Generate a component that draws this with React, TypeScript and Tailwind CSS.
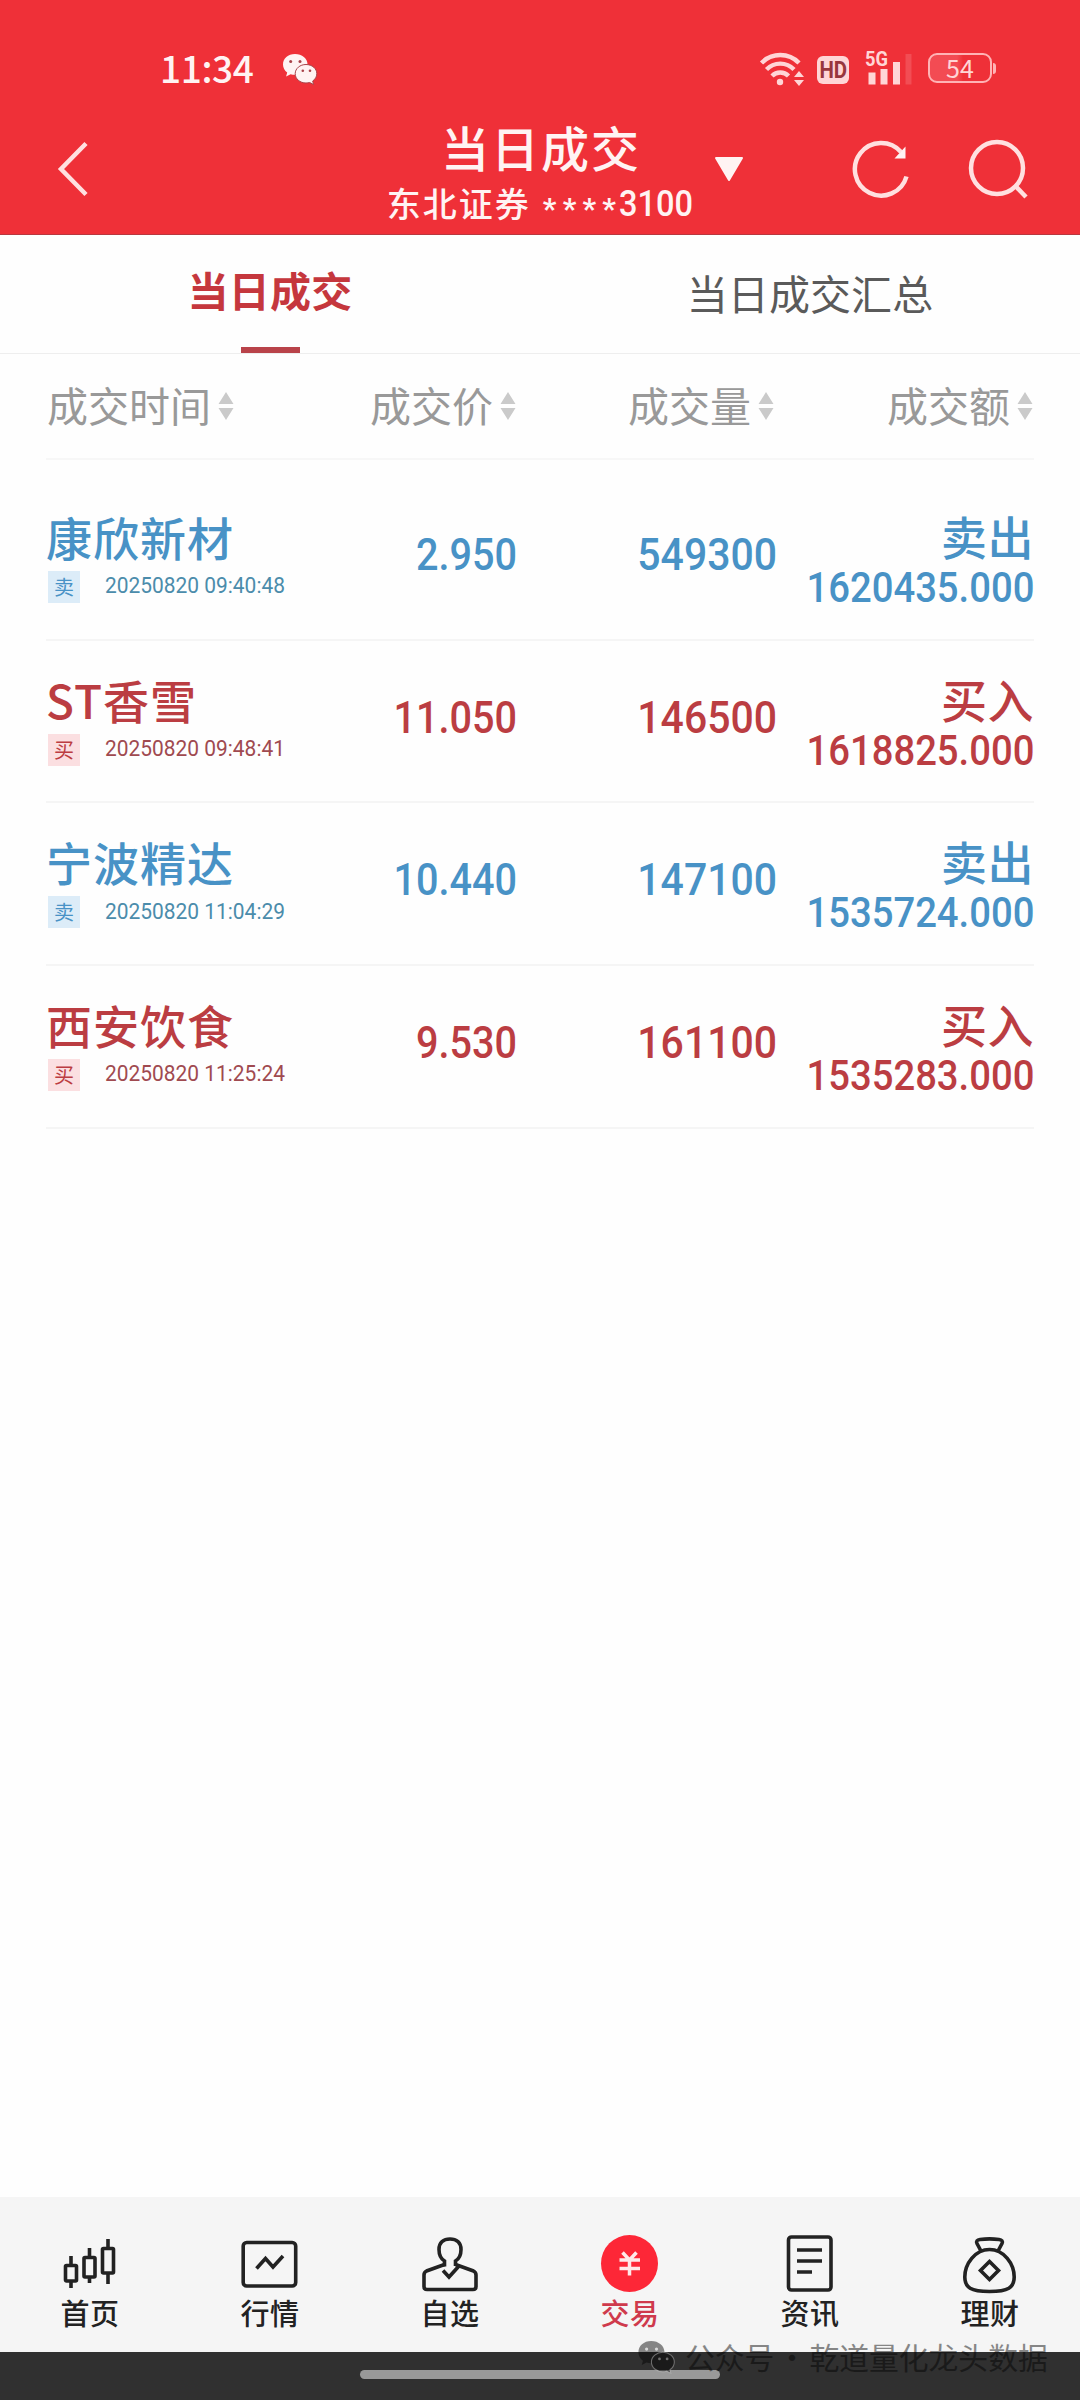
import React from 'react';

interface Trade {
  name: string;
  side: 'buy' | 'sell';
  time: string;
  price: string;
  volume: string;
  amount: string;
}

const trades: Trade[] = [
  { name: '康欣新材', side: 'sell', time: '20250820 09:40:48', price: '2.950', volume: '549300', amount: '1620435.000' },
  { name: 'ST香雪', side: 'buy', time: '20250820 09:48:41', price: '11.050', volume: '146500', amount: '1618825.000' },
  { name: '宁波精达', side: 'sell', time: '20250820 11:04:29', price: '10.440', volume: '147100', amount: '1535724.000' },
  { name: '西安饮食', side: 'buy', time: '20250820 11:25:24', price: '9.530', volume: '161100', amount: '1535283.000' },
];

const WechatIcon: React.FC<{ className?: string; eye: string }> = ({ className, eye }) => (
  <svg viewBox="0 0 36 32" className={className}>
    <path d="M13 1C6 1 1 5.600 1 11.500c0 3.300 1.600 6.100 4.200 8l-1.100 4 4.500-2.300c1.400.4 2.900.6 4.400.6 7 0 12.500-4.400 12.500-10.300S20 1 13 1z" fill="currentColor" />
    <path d="M24 11.500c-6 0-10.800 4-10.800 9.200S18 30 24 30c1.300 0 2.500-.2 3.600-.5l4 2-.9-3.500c2.500-1.700 4.100-4.300 4.100-7.300 0-5.200-4.800-9.200-10.800-9.200z" fill="currentColor" stroke={eye} strokeWidth="1" />
    <circle cx="8.700" cy="8.500" r="1.500" fill={eye} />
    <circle cx="18" cy="8.500" r="1.500" fill={eye} />
    <circle cx="20.800" cy="17.800" r="1.300" fill={eye} />
    <circle cx="28" cy="17.800" r="1.300" fill={eye} />
  </svg>
);

const SortIcon: React.FC = () => (
  <svg viewBox="0 0 16 30" className="ml-[7px] mt-[4px] h-[30px] w-4 shrink-0 fill-[#cacaca]">
    <path d="M8 1l7.500 12H.5zM8 29l7.500-12H.5z" />
  </svg>
);

const StatusBar: React.FC = () => (
  <div className="flex h-[92px] items-start pl-[160px] pr-[84px] pt-[50px]">
    <span className="-mt-[2px] w-[96px] text-[37px] font-medium leading-[38px] tracking-[-0.400px]">11:34</span>
    <WechatIcon className="ml-[26px] mt-[3px] h-[32px] w-[36px]" eye="#a8434a" />
    <div className="ml-auto flex text-[#ffd5d6]">
      <svg viewBox="0 0 48 36" className="h-9 w-12" fill="none" stroke="currentColor" strokeWidth="4.400">
        <path d="M2.500 13a26 26 0 0 1 37.500 0M7.500 19.500a19 19 0 0 1 27.500 0M13 26a11.500 11.500 0 0 1 16.500 0" />
        <circle cx="21" cy="32" r="3.200" fill="currentColor" stroke="none" />
        <path d="M40 21l5 6H35zM40 36l5-6H35z" fill="currentColor" stroke="none" />
      </svg>
      <div className="ml-[10px] mt-[6px] flex h-[28px] w-[32px] items-center justify-center rounded-[6px] bg-[#ffd5d6] text-[#98363d]">
        <span className="scale-x-85 font-['Roboto',sans-serif] text-[24px] font-bold leading-none">HD</span>
      </div>
      <svg viewBox="0 0 48 40" className="-mt-[4px] ml-[16px] h-10 w-12" fill="currentColor">
        <text x="0" y="20" fontSize="20" fontWeight="700" fontFamily="Roboto, sans-serif" textLength="23" lengthAdjust="spacingAndGlyphs">5G</text>
        <path d="M3.500 26.500h7v12h-7zM15.500 23h7v15.500h-7zM28 16h7v22.500h-7z" />
        <path d="M40.500 8h6v30.500h-6z" opacity=".18" />
      </svg>
      <div className="ml-[15px] mt-[3px] flex h-[30px] items-center">
        <div className="flex h-[30px] w-[64px] items-center justify-center rounded-[9px] border-[2.500px] border-[#ffb3b5] bg-linear-to-r from-[#f34b53] from-45% to-[#ef3038] to-55%">
          <span className="text-[25px] leading-[22px] -translate-y-px">54</span>
        </div>
        <div className="ml-px h-[11px] w-[3px] rounded-r-sm bg-[#ffb3b5]" />
      </div>
    </div>
  </div>
);

const Header: React.FC = () => (
  <header className="flex h-[235px] shrink-0 flex-col border-b border-[#b8383f] bg-[#ef3038] text-[#fff3f3]">
    <StatusBar />
    <div className="relative flex flex-1 justify-center">
      <svg viewBox="0 0 32 56" className="absolute left-[57px] top-[49px] h-14 w-8" fill="none" stroke="#ffe0e0" strokeWidth="4.500">
        <path d="M29 2.500L4 28l25 25.500" />
      </svg>
      <div className="flex flex-col items-center pt-[30px]">
        <h1 className="ml-[2px] text-[48px] font-medium leading-[48px] tracking-[2px]">当日成交</h1>
        <div className="mt-[16px] flex h-[34px] items-center">
          <span className="text-[34px] font-medium leading-[34px] tracking-[2px]">东北证券</span>
          <span className="ml-[12px] mt-[12px] font-['Roboto',sans-serif] text-[30px] font-bold leading-[34px] tracking-[6.200px]">****</span>
          <span className="-ml-[3px] mt-[2px] w-[74px] origin-left scale-x-88 font-['Roboto',sans-serif] text-[37px] font-medium leading-[34px]">3100</span>
        </div>
      </div>
      <svg viewBox="0 0 30 26" className="absolute left-[714px] top-[64px] h-[26px] w-[30px]" fill="currentColor" stroke="currentColor" strokeWidth="2" strokeLinejoin="round">
        <path d="M2 2h26L15 24z" />
      </svg>
      <svg viewBox="0 0 60 60" className="absolute left-[851px] top-[47px] h-[60px] w-[60px]" fill="none" stroke="#ffe0e0" strokeWidth="4.500">
        <path d="M55.500 37.500A26.300 26.300 0 1 1 50 13" />
        <path d="M54.500 7.500v12H43.500z" fill="#fff3f3" stroke="none" />
      </svg>
      <svg viewBox="0 0 62 62" className="absolute left-[967px] top-[46px] h-[62px] w-[62px]" fill="none" stroke="#ffe0e0" strokeWidth="4.500">
        <circle cx="30" cy="30" r="26" />
        <path d="M48 47.500l11 11.500" />
      </svg>
    </div>
  </header>
);

const Tabs: React.FC = () => (
  <nav className="flex h-[119px] shrink-0 border-b border-[#eeeeee]">
    <div className="flex w-1/2 flex-col items-center pt-[34px]">
      <span className="text-[41px] font-bold leading-[40px] tracking-[0.300px] text-[#c5373d]">当日成交</span>
      <div className="mt-auto h-[6px] w-[59px] bg-[#b9434a]" />
    </div>
    <div className="flex w-1/2 justify-center pt-[37px]">
      <span className="text-[41px] leading-[40px] tracking-[0.100px] text-[#5a5a5a]">当日成交汇总</span>
    </div>
  </nav>
);

const columns = ['成交时间', '成交价', '成交量', '成交额'];

const TableHead: React.FC = () => (
  <div className="mx-[46px] grid h-[106px] shrink-0 grid-cols-[188px_282px_258px_259px] items-center border-b-2 border-[#f7f7f7] pb-[5px] text-[41px] leading-[40px] text-[#999]">
    {columns.map((label) => (
      <div key={label} className="flex items-center justify-end whitespace-nowrap">
        <span>{label}</span>
        <SortIcon />
      </div>
    ))}
  </div>
);

const numberClass = "origin-right text-right font-['Roboto',sans-serif] font-medium";

const TradeRow: React.FC<{ trade: Trade }> = ({ trade }) => {
  const sell = trade.side === 'sell';
  return (
    <div className={`grid h-[162.700px] grid-cols-[240px_231px_260px_257px] border-b-2 border-[#f5f5f5] ${sell ? 'text-[#4892c6]' : 'text-[#bb3d42]'}`}>
      <div className="flex flex-col pt-[35px]">
        <span className="whitespace-nowrap text-[46px] font-medium leading-[46px] tracking-[1px]">{trade.name}</span>
        <div className="mt-[12px] flex items-center">
          <span className={`ml-[2px] flex h-8 w-8 shrink-0 items-center justify-center text-[20px] leading-none ${sell ? 'bg-[#dcecf8]' : 'bg-[#fbdfe1]'}`}>
            {sell ? '卖' : '买'}
          </span>
          <span className={`-mt-[3px] ml-[25px] origin-left scale-x-93 whitespace-nowrap font-['Roboto',sans-serif] text-[22.500px] leading-none ${sell ? 'text-[#4b8cab]' : 'text-[#a04a50]'}`}>
            {trade.time}
          </span>
        </div>
      </div>
      <span className={`${numberClass} scale-x-88 pt-[54px] text-[45px] leading-[45px]`}>{trade.price}</span>
      <span className={`${numberClass} scale-x-91 pt-[54px] text-[45px] leading-[45px]`}>{trade.volume}</span>
      <div className="flex flex-col items-end pt-[34px]">
        <span className="text-[46px] font-medium leading-[46px] tracking-[0.500px]">{sell ? '卖出' : '买入'}</span>
        <span className={`${numberClass} mt-[9px] scale-x-91 text-[42px] leading-[42px]`}>{trade.amount}</span>
      </div>
    </div>
  );
};

const navItems = [
  {
    label: '首页',
    icon: (
      <>
        <rect x="5.500" y="31.500" width="11" height="15.500" rx="1" />
        <rect x="24" y="23.500" width="11" height="19.500" rx="1" />
        <rect x="42.500" y="14.500" width="11" height="24.500" rx="1" />
        <path d="M11 22v9M11 47v7M29.500 14v9M29.500 43v6M48 5v9M48 39v11" />
      </>
    ),
  },
  {
    label: '行情',
    icon: (
      <>
        <rect x="3.200" y="8.500" width="52.500" height="43.500" rx="3.500" />
        <path d="M16.500 34.500l9-10 7.500 8.500 10-11" />
      </>
    ),
  },
  {
    label: '自选',
    icon: (
      <>
        <path d="M24.500 32.500v-5.500C20.500 24.500 19 21 19 15.500 19 8.500 23.500 5 30 5s11 3.500 11 10.500c0 5.500-1.500 9-5.500 11.500v5" />
        <path d="M24.500 30.500L6.500 37q-2.500 1.200-2.500 4v11.500q0 3 3 3h46q3 0 3-3V41q0-2.800-2.500-4L35.500 30.500" />
        <path d="M23 36.500l6 6.500 10-11" />
      </>
    ),
  },
  {
    label: '交易',
    active: true,
    icon: (
      <>
        <circle cx="29.500" cy="29.500" r="28.500" fill="#fd2737" stroke="none" />
        <path d="M22.500 18.500l7 7.500 7-7.500M19.500 26h20.500M19.500 34.500h20.500M29.500 26v15.500" stroke="#ffe9e9" strokeWidth="3.500" />
      </>
    ),
  },
  {
    label: '资讯',
    icon: (
      <>
        <rect x="8.500" y="3" width="42.500" height="53" rx="3" />
        <path d="M17 16h25M17 27h25M17 38h15" />
      </>
    ),
  },
  {
    label: '理财',
    icon: (
      <>
        <path d="M21 17l-4-7.500q-1.500-3.500 3-4 9.500-1.200 19 0 4.500.5 3 4L38 17" />
        <path d="M29.500 15.500C15 15.500 4.800 30 4.800 43c0 10.500 6 14.500 24.700 14.500S54.200 53.500 54.200 43c0-13-10.200-27.500-24.700-27.500z" />
        <path d="M29.500 27.500l9 9-9 9-9-9z" />
      </>
    ),
  },
];

const BottomNav: React.FC = () => (
  <nav className="grid h-[155px] shrink-0 grid-cols-6 bg-[#f5f5f5]">
    {navItems.map((item) => (
      <div key={item.label} className={`flex flex-col items-center pt-[37px] ${item.active ? 'text-[#cf3a4c]' : 'text-[#222]'}`}>
        <svg viewBox="0 0 60 60" className="h-[60px] w-[60px]" fill="none" stroke="currentColor" strokeWidth="3.600">
          {item.icon}
        </svg>
        <span className="mt-[4px] text-[29px] font-medium leading-[29px] tracking-[0.500px]">{item.label}</span>
      </div>
    ))}
  </nav>
);

const App: React.FC = () => (
  <div className="relative flex h-[2400px] w-[1080px] flex-col overflow-hidden bg-[#fefefe] font-['Noto_Sans_CJK_SC',sans-serif]">
    <Header />
    <Tabs />
    <TableHead />
    <main className="mx-[46px] flex-1 pt-[18px]">
      {trades.map((trade) => (
        <TradeRow key={trade.time} trade={trade} />
      ))}
    </main>
    <BottomNav />
    {/* System gesture bar */}
    <div className="flex h-12 shrink-0 justify-center bg-[#303030] pt-[18px]">
      <div className="h-[9px] w-[360px] rounded-full bg-[#999]" />
    </div>
    {/* Account watermark over the bottom edge */}
    <div className="absolute left-[636px] top-[2340px] flex items-start whitespace-nowrap text-black opacity-45">
      <WechatIcon className="h-[34px] w-[41px]" eye="#bbb" />
      <span className="ml-[8px] mt-px text-[29.800px] leading-[30px]">公众号</span>
      <span className="mt-px w-[35px] text-center text-[30px] leading-[30px]">·</span>
      <span className="mt-px text-[29.800px] leading-[30px]">乾道量化龙头数据</span>
    </div>
  </div>
);

export default App;
